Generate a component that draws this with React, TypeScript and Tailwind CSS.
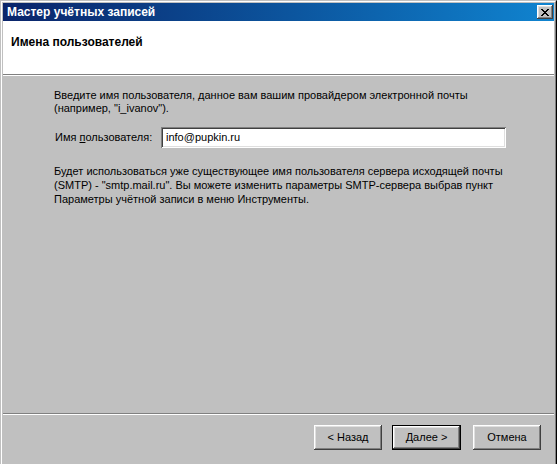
import React from "react";

const font = { fontFamily: '"Liberation Sans", Arial, sans-serif' };

function WinButton({ children, isDefault }: { children: React.ReactNode; isDefault?: boolean }) {
  const face = (
    <div className="flex h-full w-full items-center justify-center bg-[#c0c0c0] text-[11px] text-black shadow-[inset_-1px_-1px_#404040,inset_1px_1px_#ffffff,inset_-2px_-2px_#808080,inset_2px_2px_#dfdfdf]">
      {children}
    </div>
  );
  if (isDefault) {
    return <div className="h-[25px] w-[69px] border border-black">{face}</div>;
  }
  return <div className="h-[25px] w-[68px]">{face}</div>;
}

export default function App() {
  return (
    <div className="h-[464px] w-[559px] overflow-hidden bg-white" style={font}>
      <div className="h-[470px] w-[557px] border border-[#c0c0c0] border-r-black border-b-black">
        <div className="flex h-full flex-col border border-white border-r-[#808080] border-b-[#808080] bg-[#c0c0c0] p-[1px]">
          {/* title bar */}
          <div className="flex h-[18px] shrink-0 items-center justify-between bg-gradient-to-r from-[#0a246a] to-[#1084d0] pl-[4px] pr-[1px]">
            <span className="text-[12px] font-bold text-white">Мастер учётных записей</span>
            <div className="flex h-[14px] w-[16px] items-center justify-center bg-[#c0c0c0] shadow-[inset_-1px_-1px_#404040,inset_1px_1px_#ffffff,inset_-2px_-2px_#808080,inset_2px_2px_#dfdfdf]">
              <svg width="8" height="7" viewBox="0 0 8 7" shapeRendering="crispEdges">
                <path d="M0 0h2v1h-2zM6 0h2v1h-2zM1 1h2v1h-2zM5 1h2v1h-2zM2 2h4v1h-4zM3 3h2v1h-2zM2 4h4v1h-4zM1 5h2v1h-2zM5 5h2v1h-2zM0 6h2v1h-2zM6 6h2v1h-2z" fill="#000" />
              </svg>
            </div>
          </div>

          {/* header */}
          <div className="h-[53px] shrink-0 bg-white pl-[8px] pt-[14px]">
            <div className="text-[12px] font-bold leading-[14px] text-black">Имена пользователей</div>
          </div>
          <div className="h-[2px] shrink-0 border-t border-b border-t-[#808080] border-b-white" />

          {/* body */}
          <div className="flex h-[337px] shrink-0 flex-col pl-[51px] pt-[13px] text-[11px] leading-[13px] text-black">
            <p>
              Введите имя пользователя, данное вам вашим провайдером электронной почты
              <br />
              (например, "i_ivanov").
            </p>
            <div className="mt-[12px] flex items-center">
              <label className="w-[107px] pl-[1px]">
                Имя <span className="underline">п</span>ользователя:
              </label>
              <div className="flex h-[21px] w-[345px] items-center bg-white pl-[5px] shadow-[inset_1px_1px_#808080,inset_-1px_-1px_#ffffff,inset_2px_2px_#404040,inset_-2px_-2px_#dfdfdf]">
                info@pupkin.ru
              </div>
            </div>
            <p className="mt-[16px] leading-[14px]">
              Будет использоваться уже существующее имя пользователя сервера исходящей почты
              <br />
              (SMTP) - "smtp.mail.ru". Вы можете изменить параметры SMTP-сервера выбрав пункт
              <br />
              Параметры учётной записи в меню Инструменты.
            </p>
          </div>

          <div className="h-[2px] shrink-0 border-t border-b border-t-[#808080] border-b-white" />

          {/* buttons */}
          <div className="flex justify-end pr-[13px] pt-[10px]">
            <WinButton>&lt; Назад</WinButton>
            <div className="ml-[10px] -mt-[0px]">
              <WinButton isDefault>Далее &gt;</WinButton>
            </div>
            <div className="ml-[12px]">
              <WinButton>Отмена</WinButton>
            </div>
          </div>
        </div>
      </div>
    </div>
  );
}
